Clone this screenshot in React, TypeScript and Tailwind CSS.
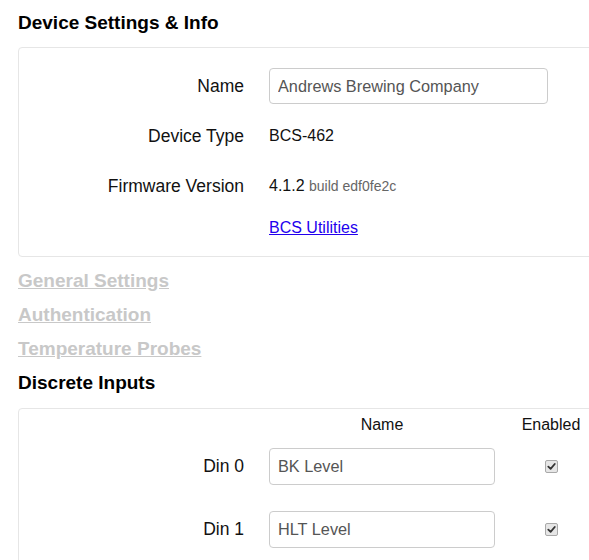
import React from "react";

function Check() {
  return (
    <span className="inline-flex h-[13px] w-[13px] items-center justify-center rounded-[2px] border border-[#a9a9a9] bg-[#e6e6e6]">
      <svg width="9" height="9" viewBox="0 0 10 10">
        <path d="M1.5 5.2 L4 7.6 L8.6 2.2" fill="none" stroke="#333" strokeWidth="2" strokeLinecap="round" strokeLinejoin="round" />
      </svg>
    </span>
  );
}

export default function App() {
  return (
    <div className="w-[589px] h-[560px] overflow-hidden bg-white text-[#111] font-['Liberation_Sans',Arial,sans-serif]">
      <div className="pl-[18px] pt-[6px] w-[640px]">
        <h2 className="h-[34px] flex items-center text-[19px] font-bold text-black">Device Settings &amp; Info</h2>
        <div className="mt-[7px] border border-[#e6e6e6] rounded-[4px] pt-[20px] pb-[18px] flex flex-col gap-[14px] text-[16px]">
          <div className="flex items-center h-[36px]">
            <div className="w-[225px] text-right text-[17.5px]">Name</div>
            <input
              className="ml-[25px] w-[279px] h-[36px] border border-[#ccc] rounded-[4px] px-[8px] text-[16.3px] text-[#555] outline-none"
              defaultValue="Andrews Brewing Company"
            />
          </div>
          <div className="flex items-center h-[36px]">
            <div className="w-[225px] text-right text-[17.5px]">Device Type</div>
            <div className="ml-[25px]">BCS-462</div>
          </div>
          <div className="flex items-center h-[36px]">
            <div className="w-[225px] text-right text-[17.5px]">Firmware Version</div>
            <div className="ml-[25px]">
              4.1.2 <span className="text-[14px] text-[#666]">build edf0fe2c</span>
            </div>
          </div>
          <div className="flex items-center h-[20px]">
            <div className="w-[225px]" />
            <a href="#" className="ml-[25px] text-[#2200ee] underline">BCS Utilities</a>
          </div>
        </div>
        <div className="mt-[7px]">
          <a href="#" className="h-[34px] flex items-center text-[19px] font-bold text-[#c8c8c8] underline">General Settings</a>
          <a href="#" className="h-[34px] flex items-center text-[19px] font-bold text-[#c8c8c8] underline">Authentication</a>
          <a href="#" className="h-[34px] flex items-center text-[19px] font-bold text-[#c8c8c8] underline">Temperature Probes</a>
          <h2 className="h-[34px] flex items-center text-[19px] font-bold text-black">Discrete Inputs</h2>
        </div>
        <div className="mt-[8px] border border-[#e6e6e6] rounded-[4px] pt-[6px] pb-[20px] text-[16px]">
          <div className="flex items-center h-[20px]">
            <div className="w-[225px]" />
            <div className="ml-[25px] w-[226px] text-center">Name</div>
            <div className="w-[112px] text-center">Enabled</div>
          </div>
          <div className="mt-[13px] flex flex-col gap-[26px]">
            {["BK Level", "HLT Level"].map((v, i) => (
              <div key={i} className="flex items-center h-[37px]">
                <div className="w-[225px] text-right text-[17.5px]">Din {i}</div>
                <input
                  className="ml-[25px] w-[226px] h-[37px] border border-[#ccc] rounded-[4px] px-[8px] text-[16.3px] text-[#555] outline-none"
                  defaultValue={v}
                />
                <div className="w-[112px] flex justify-center">
                  <Check />
                </div>
              </div>
            ))}
          </div>
        </div>
      </div>
    </div>
  );
}
